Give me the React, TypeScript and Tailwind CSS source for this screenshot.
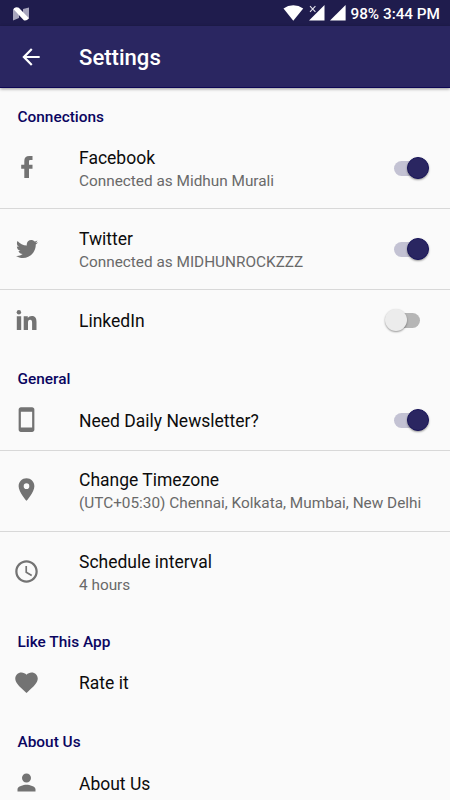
import React, { useState } from 'react';
import {
  MdArrowBack,
  MdStayCurrentPortrait,
  MdPlace,
  MdAccessTime,
  MdFavorite,
  MdPerson,
} from 'react-icons/md';
import { FaTwitter } from 'react-icons/fa';

const StatusBar = () => (
  <div className="flex h-[26px] items-center justify-between bg-[#1f1c4d] pl-[13px] pr-[10px] text-white">
    <svg className="mt-px" width="16" height="14" viewBox="0 0 16 14">
      <path d="M0 1.5 6 5V11L0 13.5zM16 .5v11l-6-2V2z" fill="#a7a5bd" />
      <path d="M1 1.2Q3.5-.3 5.8.8L16 11.2Q13.5 14.2 10.8 13.2L1 2.8z" fill="#fff" />
    </svg>
    <div className="flex items-center">
      <svg className="mr-[5px]" width="21" height="16" viewBox="0 0 21 16">
        <path d="M.5 3.4Q4.8.3 10.3.3T20.2 3.4L10.3 15.8z" fill="#fff" />
      </svg>
      <svg className="mr-[5px]" width="16" height="16" viewBox="0 0 16 16">
        <path d="M15.5 0v15.6H0L6.8 8.8 8.8 6.8z" fill="#fff" />
        <path d="m1 1.2 5.4 5.6m0-5.6-5.4 5.6" stroke="#e4e3ec" strokeWidth="1.1" />
      </svg>
      <svg className="mr-[4px]" width="16" height="16" viewBox="0 0 16 16">
        <path d="M15.6 0v15.6H0z" fill="#fff" />
      </svg>
      <span className="pt-[2px] text-[15.3px] font-medium leading-[24px]">98% 3:44 PM</span>
    </div>
  </div>
);

const FacebookIcon = () => (
  <svg width="12" height="22" viewBox="0 0 12 22" fill="currentColor">
    <path d="M11.5 0v4H9.4C8.2 4 8 4.5 8 5.5V8.7H11.5V12.8H8V22H3.3V12.8H.2V8.7H3.3V5C3.3 1.8 5 0 8.2 0z" />
  </svg>
);

const LinkedInIcon = () => (
  <svg width="21" height="20" viewBox="-0.5 0 21 20" fill="currentColor">
    <circle cx="2.4" cy="2.2" r="2.2" />
    <path d="M.3 6.2h4.4V20H.3zM7.2 6.2h4.1v1.9C12 6.8 13.4 5.9 15.3 5.9 19 5.9 20 8.3 20 12V20H15.6V13C15.6 11.2 15.4 9.7 13.6 9.7S11.5 11.2 11.5 13V20H7.2z" />
  </svg>
);

interface SwitchProps {
  checked: boolean;
  label: string;
  onChange: () => void;
}

const Switch = ({ checked, label, onChange }: SwitchProps) => (
  <button
    type="button"
    role="switch"
    aria-checked={checked}
    aria-label={label}
    onClick={onChange}
    className={`flex h-[15px] w-[35px] shrink-0 items-center rounded-full ${
      checked
        ? 'mr-[21px] justify-end bg-[linear-gradient(90deg,#c3c2d3_70%,transparent_70%)]'
        : 'mr-[30px] justify-start bg-[linear-gradient(90deg,transparent_30%,#b6b6b6_30%)]'
    }`}
  >
    <span
      className={`size-[22px] shrink-0 rounded-full shadow-[0_1px_2px_rgba(0,0,0,0.4)] ${
        checked ? 'border border-[#18145a] bg-[#2a2661]' : 'bg-[#ececec]'
      }`}
    />
  </button>
);

const SectionTitle = ({ children }: { children: React.ReactNode }) => (
  <h2 className="h-10 pl-[17.5px] pt-[19px] text-[15.4px] font-medium leading-5 text-[#0a0560]">{children}</h2>
);

interface RowProps {
  icon: React.ReactNode;
  title: string;
  summary?: string;
  divider?: boolean;
  children?: React.ReactNode;
}

const Row = ({ icon, title, summary, divider, children }: RowProps) => (
  <div
    className={`flex items-center ${summary ? 'h-[81.2px]' : 'h-[60.1px]'} ${
      divider ? 'border-b border-[#d8d8d8]' : ''
    }`}
  >
    <div className="flex w-[53px] shrink-0 justify-center pb-[1.4px] text-[#737373]">{icon}</div>
    <div className="ml-[26px] flex-1 whitespace-nowrap pt-[2px]">
      <div className="text-[17.5px] leading-[23px] text-[#0c0c0c]">{title}</div>
      {summary && <div className="text-[15.35px] leading-[22px] text-[#696969]">{summary}</div>}
    </div>
    {children}
  </div>
);

const App = () => {
  const [facebook, setFacebook] = useState(true);
  const [twitter, setTwitter] = useState(true);
  const [linkedin, setLinkedin] = useState(false);
  const [newsletter, setNewsletter] = useState(true);

  return (
    <div className="h-[800px] w-[450px] overflow-hidden bg-[#fafafa] font-['Roboto',sans-serif]">
      <StatusBar />

      {/* Toolbar */}
      <header className="flex h-[62px] items-center border-b border-[#0d0754] bg-[#2a2661] pl-[18px] text-white shadow-[0_1px_3px_rgba(0,0,0,0.4)]">
        <MdArrowBack size={26} />
        <h1 className="ml-[35px] pt-[3px] text-[22.1px] font-medium">Settings</h1>
      </header>

      <main>
        <SectionTitle>Connections</SectionTitle>
        <Row icon={<FacebookIcon />} title="Facebook" summary="Connected as Midhun Murali" divider>
          <Switch label="Facebook" checked={facebook} onChange={() => setFacebook(!facebook)} />
        </Row>
        <Row icon={<FaTwitter size={22} />} title="Twitter" summary="Connected as MIDHUNROCKZZZ" divider>
          <Switch label="Twitter" checked={twitter} onChange={() => setTwitter(!twitter)} />
        </Row>
        <Row icon={<LinkedInIcon />} title="LinkedIn">
          <Switch label="LinkedIn" checked={linkedin} onChange={() => setLinkedin(!linkedin)} />
        </Row>

        <SectionTitle>General</SectionTitle>
        <Row icon={<MdStayCurrentPortrait size={27} />} title="Need Daily Newsletter?" divider>
          <Switch label="Newsletter" checked={newsletter} onChange={() => setNewsletter(!newsletter)} />
        </Row>
        <Row
          icon={<MdPlace size={27} />}
          title="Change Timezone"
          summary="(UTC+05:30) Chennai, Kolkata, Mumbai, New Delhi"
          divider
        />
        <Row icon={<MdAccessTime size={27} />} title="Schedule interval" summary="4 hours" />

        <SectionTitle>Like This App</SectionTitle>
        <Row icon={<MdFavorite size={27} />} title="Rate it" />

        <SectionTitle>About Us</SectionTitle>
        <Row icon={<MdPerson size={27} />} title="About Us" />
      </main>
    </div>
  );
};

export default App;
